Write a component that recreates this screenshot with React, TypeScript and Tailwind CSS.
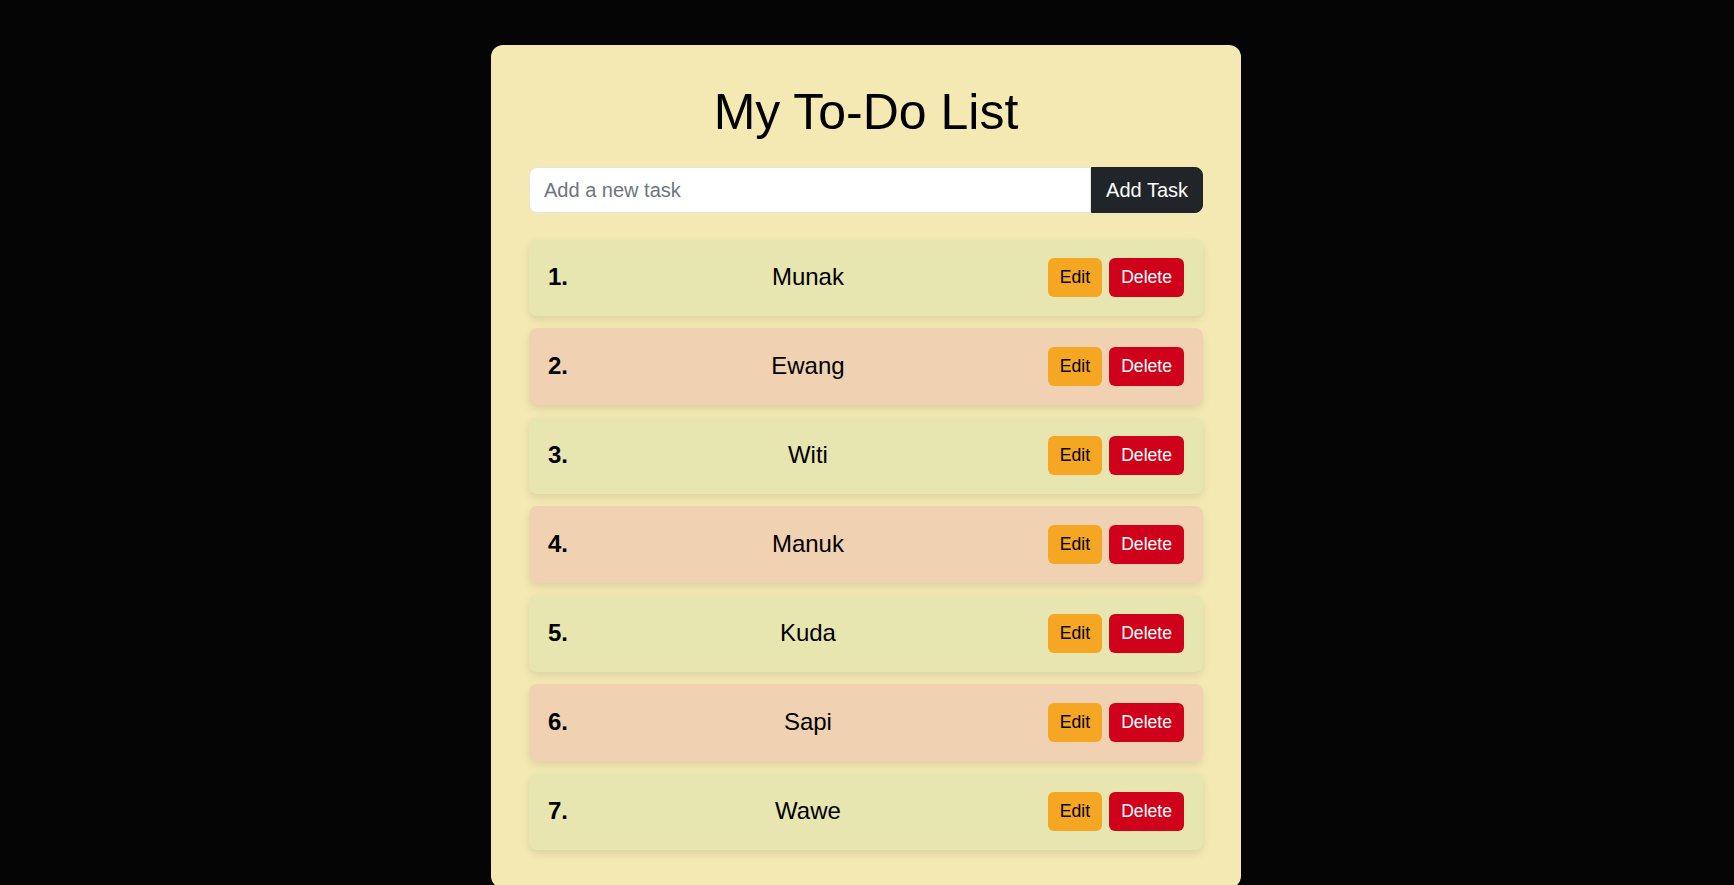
import React, { useState } from 'react';

const initialTasks = ['Munak', 'Ewang', 'Witi', 'Manuk', 'Kuda', 'Sapi', 'Wawe'];

export default function App() {
  const [tasks] = useState<string[]>(initialTasks);

  return (
    <div className="min-h-screen bg-[#050505] pt-[45px] pr-[2px] font-['Liberation_Sans',Arial,sans-serif] text-black">
      <div className="mx-auto w-[750px] rounded-xl bg-[#f5e9b3] px-[38px] pt-[37px] pb-[38px]">
        <h1 className="mb-[25px] text-center text-[50px] leading-[1.2] font-normal">My To-Do List</h1>

        {/* add task */}
        <div className="flex h-[46px]">
          <input
            type="text"
            placeholder="Add a new task"
            className="min-w-0 flex-1 rounded-l-lg border border-[#e3e3e3] bg-white px-[14px] text-[20px] outline-none placeholder:text-[#6c757d]"
          />
          <button className="rounded-r-lg border border-[#212529] bg-[#212529] px-[14px] text-[20px] text-white">
            Add Task
          </button>
        </div>

        <ul className="mt-[26px] flex flex-col gap-3">
          {tasks.map((task, i) => (
            <li
              key={task}
              className={
                'flex items-center rounded-lg px-[19px] py-[19.3px] shadow-[0_4px_8px_rgba(0,0,0,0.1)] ' +
                (i % 2 === 0 ? 'bg-[#e7e6b0]' : 'bg-[#f0d2b3]')
              }
            >
              <span className="text-[24px] leading-normal font-bold">{i + 1}.</span>
              <span className="flex-1 text-center text-[24px] leading-normal">{task}</span>
              <div className="flex gap-[7px]">
                <button className="rounded-md bg-[#f5a623] px-3 py-[6px] text-[17.6px] leading-[1.5] text-black">Edit</button>
                <button className="rounded-md bg-[#d0021b] px-3 py-[6px] text-[17.6px] leading-[1.5] text-white">Delete</button>
              </div>
            </li>
          ))}
        </ul>
      </div>
    </div>
  );
}
